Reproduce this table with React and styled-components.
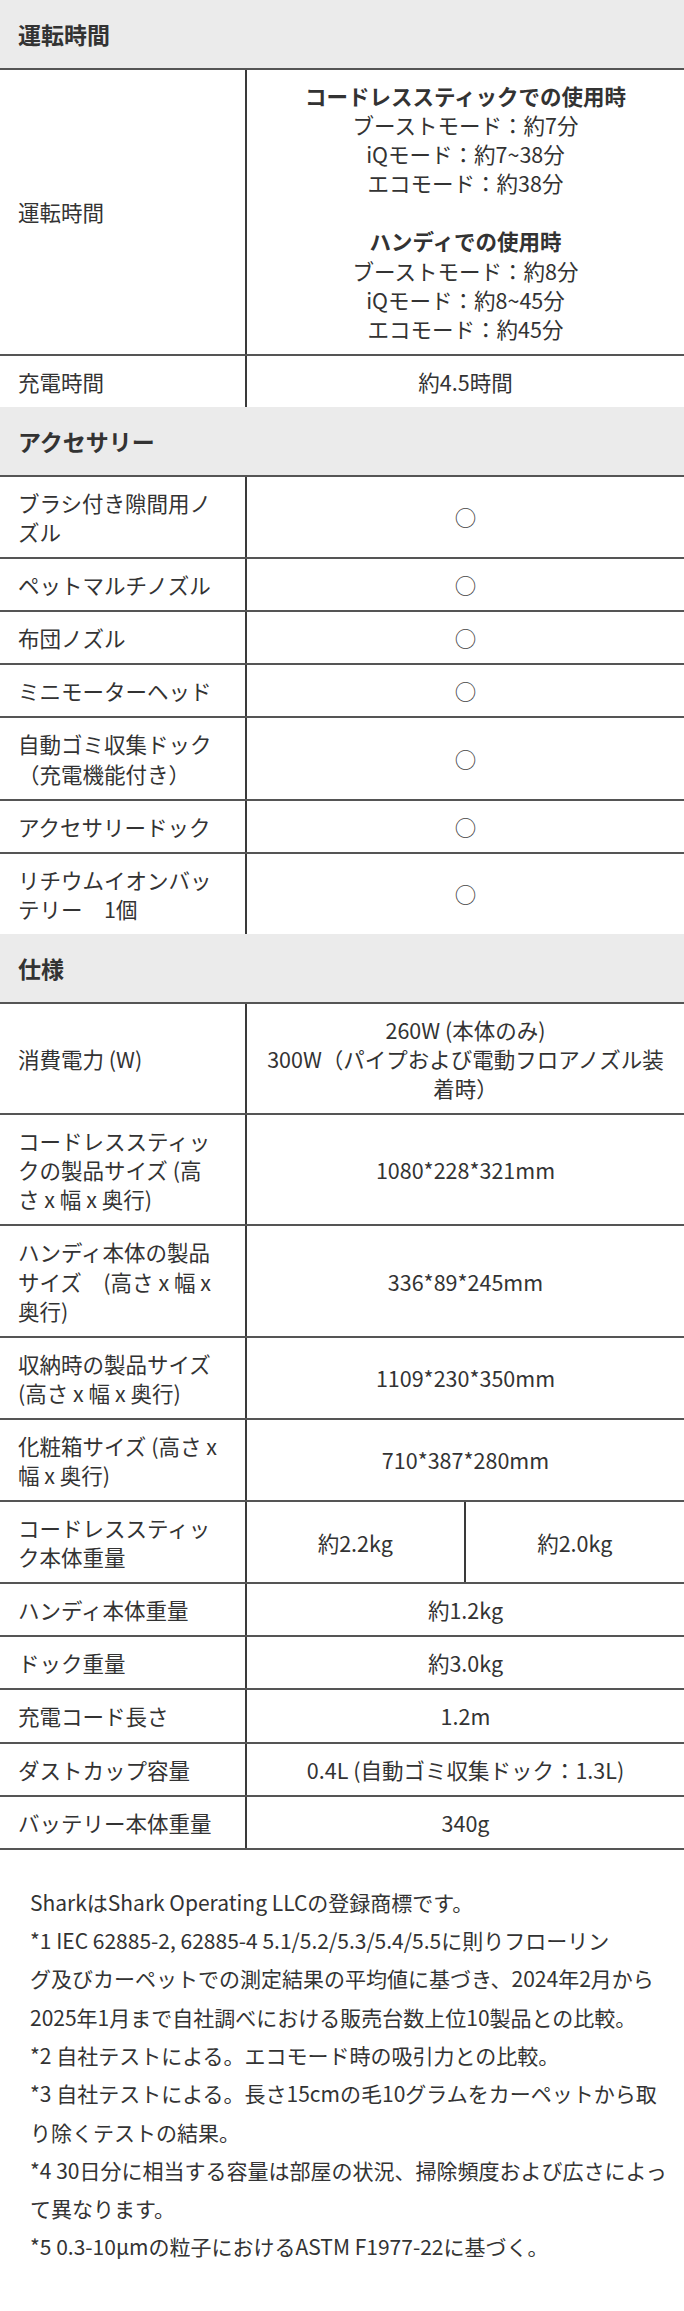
import React from "react";
import styled, { createGlobalStyle } from "styled-components";

const GlobalStyle = createGlobalStyle`
  html, body { margin: 0; padding: 0; background: #fff; }
  body {
    font-family: "Noto Sans CJK JP", "Noto Sans", sans-serif;
    color: #333;
  }
`;

const Page = styled.div`
  width: 684px;
`;

const SectionHeader = styled.h2`
  margin: 0;
  height: 68px;
  display: flex;
  align-items: center;
  padding: 0 18px;
  background: #ebebeb;
  font-size: 23px;
  font-weight: 700;
  color: #333;
`;

const Table = styled.div`
  border-bottom: ${(p) => (p.$closed ? "2px solid #555" : "none")};
`;

const Row = styled.div`
  display: grid;
  grid-template-columns: 247px 1fr;
  border-top: 2px solid #555;
  font-size: 21.5px;
  line-height: 29.1px;
`;

const Label = styled.div`
  display: flex;
  align-items: center;
  padding: 11px 18px;
  border-right: 2px solid #3a3a3a;
`;

const Value = styled.div`
  display: flex;
  align-items: center;
  justify-content: center;
  text-align: center;
  padding: 11px 12px;
  border-right: ${(p) => (p.$divided ? "2px solid #3a3a3a" : "none")};
`;

const Split = styled.div`
  display: grid;
  grid-template-columns: 1fr 1fr;
`;

const Group = styled.div`
  & + & {
    margin-top: 29.1px;
  }
`;

const GroupTitle = styled.div`
  font-weight: 700;
`;

const Mark = styled.span`
  color: #444;
`;

const Footer = styled.div`
  padding: 33px 20px 45px 30px;
  font-size: 21px;
  line-height: 38.3px;
  color: #333;
`;

const Note = styled.p`
  margin: 0;
  white-space: nowrap;
`;

const lines = (arr) =>
  arr.map((t, i) => (
    <React.Fragment key={i}>
      {i > 0 && <br />}
      {t}
    </React.Fragment>
  ));

const SpecRow = ({ label, children, split }) => (
  <Row>
    <Label>
      <span>{lines(label)}</span>
    </Label>
    {split ? (
      <Split>
        <Value $divided>
          <div>{split[0]}</div>
        </Value>
        <Value>
          <div>{split[1]}</div>
        </Value>
      </Split>
    ) : (
      <Value>
        <div>{children}</div>
      </Value>
    )}
  </Row>
);

const modes = [
  {
    title: "コードレススティックでの使用時",
    items: ["ブーストモード：約7分", "iQモード：約7~38分", "エコモード：約38分"],
  },
  {
    title: "ハンディでの使用時",
    items: ["ブーストモード：約8分", "iQモード：約8~45分", "エコモード：約45分"],
  },
];

const accessories = [
  ["ブラシ付き隙間用ノ", "ズル"],
  ["ペットマルチノズル"],
  ["布団ノズル"],
  ["ミニモーターヘッド"],
  ["自動ゴミ収集ドック", "（充電機能付き）"],
  ["アクセサリードック"],
  ["リチウムイオンバッ", "テリー　1個"],
];

const specs = [
  { label: ["消費電力 (W)"], value: lines(["260W (本体のみ)", "300W（パイプおよび電動フロアノズル装", "着時）"]) },
  { label: ["コードレススティッ", "クの製品サイズ (高", "さ x 幅 x 奥行)"], value: "1080*228*321mm" },
  { label: ["ハンディ本体の製品", "サイズ　(高さ x 幅 x", "奥行)"], value: "336*89*245mm" },
  { label: ["収納時の製品サイズ", "(高さ x 幅 x 奥行)"], value: "1109*230*350mm" },
  { label: ["化粧箱サイズ (高さ x", "幅 x 奥行)"], value: "710*387*280mm" },
  { label: ["コードレススティッ", "ク本体重量"], split: ["約2.2kg", "約2.0kg"] },
  { label: ["ハンディ本体重量"], value: "約1.2kg" },
  { label: ["ドック重量"], value: "約3.0kg" },
  { label: ["充電コード長さ"], value: "1.2m" },
  { label: ["ダストカップ容量"], value: "0.4L (自動ゴミ収集ドック：1.3L)" },
  { label: ["バッテリー本体重量"], value: "340g" },
];

const notes = [
  ["SharkはShark Operating LLCの登録商標です。"],
  [
    "*1 IEC 62885-2, 62885-4 5.1/5.2/5.3/5.4/5.5に則りフローリン",
    "グ及びカーペットでの測定結果の平均値に基づき、2024年2月から",
    "2025年1月まで自社調べにおける販売台数上位10製品との比較。",
  ],
  ["*2 自社テストによる。エコモード時の吸引力との比較。"],
  ["*3 自社テストによる。長さ15cmの毛10グラムをカーペットから取", "り除くテストの結果。"],
  ["*4 30日分に相当する容量は部屋の状況、掃除頻度および広さによっ", "て異なります。"],
  ["*5 0.3-10μmの粒子におけるASTM F1977-22に基づく。"],
];

export default function App() {
  return (
    <>
      <GlobalStyle />
      <Page>
        <SectionHeader>運転時間</SectionHeader>
        <Table>
          <SpecRow label={["運転時間"]}>
            {modes.map((m) => (
              <Group key={m.title}>
                <GroupTitle>{m.title}</GroupTitle>
                {lines(m.items)}
              </Group>
            ))}
          </SpecRow>
          <SpecRow label={["充電時間"]}>約4.5時間</SpecRow>
        </Table>

        <SectionHeader>アクセサリー</SectionHeader>
        <Table>
          {accessories.map((a) => (
            <SpecRow key={a.join("")} label={a}>
              <Mark>○</Mark>
            </SpecRow>
          ))}
        </Table>

        <SectionHeader>仕様</SectionHeader>
        <Table $closed>
          {specs.map((s) => (
            <SpecRow key={s.label.join("")} label={s.label} split={s.split}>
              {s.value}
            </SpecRow>
          ))}
        </Table>

        <Footer>
          {notes.map((n, i) => (
            <Note key={i}>{lines(n)}</Note>
          ))}
        </Footer>
      </Page>
    </>
  );
}
